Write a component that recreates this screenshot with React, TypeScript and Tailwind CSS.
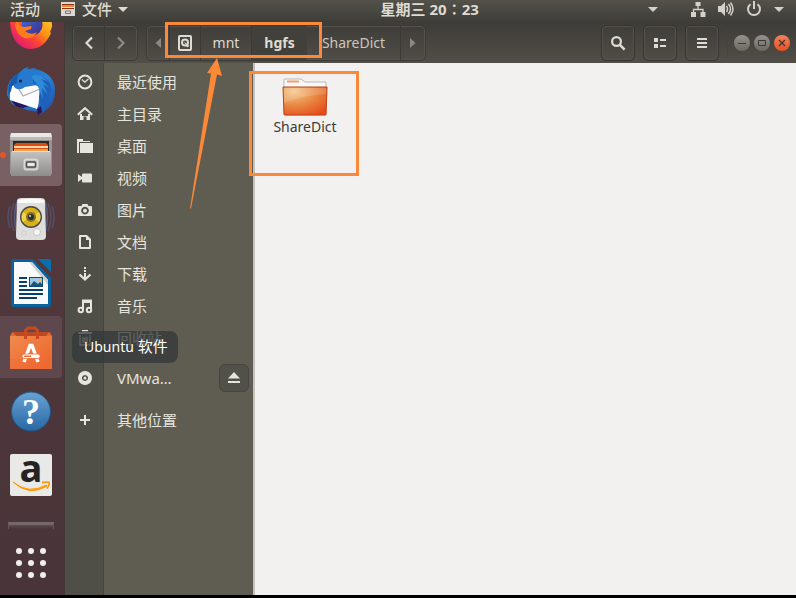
import type { ReactNode } from 'react'
import clsx from 'clsx'

/* ---------- symbolic icons (16px grid) ---------- */

function Glyph({ children }: { children: ReactNode }) {
  return (
    <svg viewBox="0 0 16 16" className="size-4 shrink-0" fill="currentColor" aria-hidden="true">
      {children}
    </svg>
  )
}

const icons = {
  recent: (
    <Glyph>
      <circle cx="8" cy="8" r="6.4" fill="none" stroke="currentColor" strokeWidth="2" />
      <path d="M5 5.5 7.8 8.2 11.4 5" fill="none" stroke="currentColor" strokeWidth="1.3" />
    </Glyph>
  ),
  home: (
    <Glyph>
      <path d="M.8 8.800 8 2.200l7.200 6.600" fill="none" stroke="currentColor" strokeWidth="2" />
      <path d="M3 8h2v2h6V8h2v6H9.500v-3.500h-3V14H3z" />
    </Glyph>
  ),
  folder: (
    <Glyph>
      <path d="M0 15V1h6v2h7v1H2v11z" />
      <path d="M3 15V5h13v10z" />
    </Glyph>
  ),
  video: (
    <Glyph>
      <path d="M1 4v8l4-3V7z" />
      <rect x="5" y="3.5" width="10" height="9" rx="1" />
    </Glyph>
  ),
  camera: (
    <Glyph>
      <path
        fillRule="evenodd"
        d="M5.5 2h5l1 2H14q1 0 1 1v8q0 1-1 1H2q-1 0-1-1V5q0-1 1-1h2.500zM8 4.800a3.800 3.800 0 1 0 .01 0zm0 2a1.900 1.900 0 1 1-.01 0z"
      />
    </Glyph>
  ),
  document: (
    <Glyph>
      <path d="M3 2h6.500L13 5.500V14H3z" fill="none" stroke="currentColor" strokeWidth="2" strokeLinejoin="round" />
      <path d="M9 1.500V6h4.500z" />
    </Glyph>
  ),
  download: (
    <Glyph>
      <path d="M7 1h2v2H7zM7 4h2v2H7zM7 7h2v5H7z" />
      <path d="M2.500 8.500 8 13.500l5.500-5" fill="none" stroke="currentColor" strokeWidth="2.200" />
    </Glyph>
  ),
  music: (
    <Glyph>
      <path d="M6 12V2.500h8V11" fill="none" stroke="currentColor" strokeWidth="2" />
      <path d="M6 2h9v3H6z" />
      <circle cx="3.800" cy="12" r="2.200" fill="none" stroke="currentColor" strokeWidth="2" />
      <circle cx="12" cy="12" r="2.200" fill="none" stroke="currentColor" strokeWidth="2" />
    </Glyph>
  ),
  trash: (
    <Glyph>
      <path d="M5 0h6v2h4v2H1V2h4z" />
      <path d="M3 5v10h10V5M6 7v6M8 7v6M10 7v6" fill="none" stroke="currentColor" strokeWidth="1.300" />
    </Glyph>
  ),
  disc: (
    <Glyph>
      <path fillRule="evenodd" d="M8 1a7 7 0 1 0 .01 0zm0 4a3 3 0 1 1-.01 0z" />
      <circle cx="8" cy="8" r="1.500" />
    </Glyph>
  ),
  plus: (
    <Glyph>
      <path d="M7 3h2v4h4v2H9v4H7V9H3V7h4z" />
    </Glyph>
  ),
  eject: (
    <Glyph>
      <path d="m8 2 6 6.500H2zM2 11h12v2H2z" />
    </Glyph>
  ),
  disk: (
    <Glyph>
      <rect x="2" y="1" width="12" height="14" rx="1" fill="none" stroke="currentColor" strokeWidth="2" />
      <circle cx="8" cy="7.500" r="3" fill="none" stroke="currentColor" strokeWidth="2" />
      <path d="m7 6.500 5.500 4.500-2.500 1.500z" />
    </Glyph>
  ),
  search: (
    <Glyph>
      <circle cx="6.500" cy="6.500" r="4.400" fill="none" stroke="currentColor" strokeWidth="2.200" />
      <path d="m9.600 9.600 5 5" stroke="currentColor" strokeWidth="2.600" />
    </Glyph>
  ),
  list: (
    <Glyph>
      <path d="M2 3h4v4H2zM8 4h6v2H8zM2 9h4v4H2zM8 10h6v2H8z" />
    </Glyph>
  ),
  menu: (
    <Glyph>
      <path d="M3 3h10v2H3zM3 7h10v2H3zM3 11h10v2H3z" />
    </Glyph>
  ),
  back: (
    <Glyph>
      <path d="M11 2.500 5.500 8 11 13.500" fill="none" stroke="currentColor" strokeWidth="2.200" />
    </Glyph>
  ),
  forward: (
    <Glyph>
      <path d="M5 2.500 10.500 8 5 13.500" fill="none" stroke="currentColor" strokeWidth="2.200" />
    </Glyph>
  ),
  pathLeft: (
    <Glyph>
      <path d="M11 3v10L5.500 8z" />
    </Glyph>
  ),
  pathRight: (
    <Glyph>
      <path d="M5 3v10l5.500-5z" />
    </Glyph>
  ),
  network: (
    <Glyph>
      <path d="M5.500 1h5v4h-5zM1 11h5v5H1zM10.500 11h5v5h-5z" />
      <path d="M8 5v3M3.500 11V8.500H13V11" fill="none" stroke="currentColor" strokeWidth="1.300" />
    </Glyph>
  ),
  volume: (
    <Glyph>
      <path d="M0 5h3l4-4v14l-4-4H0z" />
      <path d="M8.500 5q2 3 0 6M10.500 3q4 5 0 10M12.500 1.500q5 6.500 0 13" fill="none" stroke="currentColor" strokeWidth="1.500" />
    </Glyph>
  ),
  power: (
    <Glyph>
      <path d="M4.500 3.200a6 6 0 1 0 7 0" fill="none" stroke="currentColor" strokeWidth="2" />
      <path d="M7 0h2v8H7z" />
    </Glyph>
  ),
}

function Caret() {
  return (
    <svg viewBox="0 0 10 5" className="h-[5px] w-2.5 shrink-0" fill="currentColor" aria-hidden="true">
      <path d="M0 0h10L5 5z" />
    </svg>
  )
}

/* ---------- launcher icons ---------- */

function FirefoxIcon() {
  return (
    <svg viewBox="0 0 48 48" className="size-12" aria-hidden="true">
      <defs>
        <linearGradient id="ffRing" x1="0.9" y1="0.1" x2="0.2" y2="0.9">
          <stop offset="0" stopColor="#ffd23a" />
          <stop offset="0.4" stopColor="#ff9a12" />
          <stop offset="0.7" stopColor="#fb4038" />
          <stop offset="1" stopColor="#e31b76" />
        </linearGradient>
        <linearGradient id="ffGlobe" x1="0" y1="0" x2="1" y2="1">
          <stop offset="0" stopColor="#3d6fd8" />
          <stop offset="1" stopColor="#452a86" />
        </linearGradient>
      </defs>
      <path d="M3 20Q5 8 16 4l16 1q14 8 13 19l-2 5 1 1Q37 46 23 46 5 44 3 20z" fill="url(#ffRing)" />
      <circle cx="25" cy="22" r="10.500" fill="url(#ffGlobe)" />
      <path d="M10 16q1 8 8 8l6-1q2 3-3 4l-3 1q6 5 12 1-4 8-13 6-8-4-9-13z" fill="#ff7a1c" />
    </svg>
  )
}

function ThunderbirdIcon() {
  return (
    <svg viewBox="0 0 48 48" className="size-12" aria-hidden="true">
      <defs>
        <linearGradient id="tbBody" x1="0" y1="0" x2="1" y2="1">
          <stop offset="0" stopColor="#1b6cc0" />
          <stop offset="0.5" stopColor="#2b83d2" />
          <stop offset="1" stopColor="#1b4ba5" />
        </linearGradient>
      </defs>
      <path d="M0 28Q-1 14 10 7 22-1 35 4q13 6 13 20 0 16-15 23l-2-2-11-2L5 37z" fill="url(#tbBody)" />
      <path d="M4 33q3 7 12 8l6-2zM30 42l4-3 1 6-4 3z" fill="#241763" />
      <path d="M9 16 31 18q3 8 1 14 0 5-2 10L3 33Q3 29 3 26l2-7z" fill="#fcfcfe" />
      <path d="m9 17 7 12 17-7M9 17l7 12" fill="none" stroke="#a9aab4" strokeWidth="1.300" />
      <path d="M10 15Q12 1 22 0l-2 2 9-1-5 4q8 0 11 6l-5 7-12 2q-5 4-10 1l-2-3z" fill="#2679ce" />
      <path d="M2 18Q6 9 12 6q-3 5-2 10l-5 3-1 5-3 4z" fill="#1758aa" />
      <path d="M26 10q11-3 17 7l2 8-3 1 1 7-4 1v7l-5-3-2-8 1-9-7-5z" fill="#1e61bd" />
      <path d="M24 9q9-3 16 5l-6-2 8 9-6-4 5 11-6-7 1 12-5-14z" fill="#2d8cda" />
      <circle cx="13.500" cy="14" r="1.600" fill="#172743" />
    </svg>
  )
}

function FilesIcon() {
  return (
    <svg viewBox="0 0 48 48" className="size-12" aria-hidden="true">
      <defs>
        <linearGradient id="cabFront" x1="0" y1="0" x2="0" y2="1">
          <stop offset="0" stopColor="#c4c3c2" />
          <stop offset="1" stopColor="#8d8c8b" />
        </linearGradient>
      </defs>
      <path d="M4 2h40l1 5v36H3V7z" fill="#969594" />
      <path d="M4 2h40l1 4H3z" fill="#e9e9e8" />
      <path d="M3 6h42v3H3z" fill="#bab9b8" />
      <rect x="6" y="10" width="36" height="11" fill="#2b2826" />
      <path d="M7 14 9 12h30l2 2v6H7z" fill="#dc4d12" />
      <path d="M7 15h34v2H7z" fill="#f9d5ab" />
      <path d="M7 18h34v3H7z" fill="#f3a04d" />
      <path d="M5 20h38l1 2v23H4V22z" fill="url(#cabFront)" />
      <path d="M5 20h38v1H5z" fill="#e2e2e1" />
      <rect x="17.500" y="28.500" width="13" height="10" rx="2" fill="none" stroke="#d8d7d6" strokeWidth="2" />
      <rect x="19.500" y="31" width="9" height="5" rx="1" fill="#e9eae4" stroke="#4a4b49" strokeWidth="1.500" />
    </svg>
  )
}

function MusicIcon() {
  return (
    <svg viewBox="0 0 48 48" className="size-12" aria-hidden="true">
      <g fill="none" stroke="#596c9c" strokeWidth="1.500">
        <path d="M7 8q-6 14 0 28M3 11q-4 11 0 22M41 8q6 14 0 28M45 11q4 11 0 22" opacity="0.45" />
        <path d="M10 6Q5 22 10 38M38 6q5 16 0 32" opacity="0.7" />
      </g>
      <path d="M10 5q1-2 4-2h20q3 0 4 2l1 36q0 4-4 4H13q-4 0-4-4z" fill="#dededc" />
      <path d="M11 5q13-3 26 0v3H11z" fill="#fafafa" />
      <circle cx="24" cy="22" r="11" fill="#4a4746" />
      <circle cx="24" cy="22" r="9.500" fill="#d8b118" />
      <path d="m24 22 8-5q3 5 0 10zM24 22l-8-5q-3 5 0 10z" fill="#edd34b" />
      <circle cx="24" cy="22" r="5" fill="#827023" />
      <circle cx="24" cy="22" r="3" fill="#312e30" />
      <circle cx="23" cy="21" r="1" fill="#d7d7d7" />
      <circle cx="30" cy="37" r="3.500" fill="#f5f5f3" stroke="#c6c6c4" />
      <path d="M15 36h4v4h-4z" fill="none" stroke="#cfcfcd" />
    </svg>
  )
}

function WriterIcon() {
  return (
    <svg viewBox="0 0 48 48" className="size-12" aria-hidden="true">
      <path d="M6 0h20l18 19v26q0 3-3 3H7q-3 0-3-3V2q0-2 2-2z" fill="#07629d" />
      <path d="M31 0h11q2 0 2 2v11z" fill="#0a70ad" />
      <path d="M7 3h18l16 18v24H7z" fill="#fafafa" />
      <path d="m25 3 16 18v5L22 3z" fill="#cfcfd0" />
      <path d="M12 18h8v2h-8zM12 22h8v2h-8zM12 26h8v2h-8zM12 30h24v2H12zM12 34h24v2H12zM12 38h18v2H12z" fill="#073f6a" />
      <path d="M22 18h14v10H22z" fill="#0c4a79" />
      <path d="M23 19h12v8H23z" fill="#9cc9e5" />
      <path d="m23 27 4-5 4 3 2-2 2 2v2z" fill="#225373" />
      <circle cx="33" cy="21" r="1.500" fill="#ebc144" />
    </svg>
  )
}

function SoftwareIcon() {
  return (
    <svg viewBox="0 0 48 48" className="size-12" aria-hidden="true">
      <defs>
        <linearGradient id="bag" x1="0" y1="0" x2="1" y2="1">
          <stop offset="0" stopColor="#f08a4d" />
          <stop offset="1" stopColor="#ed632b" />
        </linearGradient>
      </defs>
      <path d="M5 9h38l2 5H3z" fill="#b84923" />
      <path d="M3 13 6 9l4 5zM45 13l-3-4-4 5z" fill="#e66736" />
      <path d="M3 13h42v33H3z" fill="url(#bag)" />
      <path d="M18.500 16V7.500L21 5h7l2.500 2.500V16" fill="none" stroke="#cc4720" strokeWidth="3" />
      <path d="M3 36h42v10H3z" fill="#f06b36" opacity="0.5" />
      <path d="m17 39 6-16.500h2L31 39" fill="none" stroke="#fff" strokeWidth="3.500" />
      <rect x="15" y="31" width="18" height="4.500" rx="2" fill="#fff" stroke="#ed6a30" strokeWidth="0.800" />
      <path d="M17 32.500h7v1.500h-7z" fill="#ed6a30" />
    </svg>
  )
}

function HelpIcon() {
  return (
    <svg viewBox="0 0 48 48" className="size-12" aria-hidden="true">
      <defs>
        <linearGradient id="helpBall" x1="0" y1="0" x2="0" y2="1">
          <stop offset="0" stopColor="#69a2d3" />
          <stop offset="1" stopColor="#2968a5" />
        </linearGradient>
      </defs>
      <circle cx="24" cy="24.500" r="19.500" fill="url(#helpBall)" stroke="#215789" />
      <text x="24" y="37" textAnchor="middle" fill="#fff" className="font-['Liberation_Serif',serif] text-[36px] font-bold">?</text>
    </svg>
  )
}

function AmazonIcon() {
  return (
    <svg viewBox="0 0 48 48" className="size-12" aria-hidden="true">
      <rect x="3" y="3" width="42" height="42" rx="2" fill="#e9e9e8" />
      <text x="24" y="31" textAnchor="middle" fill="#242321" className="font-['Open_Sans',sans-serif] text-[38px] font-bold">a</text>
      <path d="M6 31q16 13 33 3l1 1Q22 46 6 31z" fill="#ff9900" stroke="#ff9900" />
      <path d="M35 31.500q6-1 7 0t-2 6" fill="none" stroke="#ff9900" strokeWidth="1.800" />
    </svg>
  )
}

function FolderIcon() {
  return (
    <svg viewBox="0 0 48 40" className="h-10 w-12" aria-hidden="true">
      <defs>
        <radialGradient id="folderFront" cx="0.25" cy="0.15" r="1">
          <stop offset="0" stopColor="#f4c88c" />
          <stop offset="0.5" stopColor="#e88a45" />
          <stop offset="1" stopColor="#e64a17" />
        </radialGradient>
      </defs>
      <path d="M3 38V3q0-1 1-1h16l4 3h21v33z" fill="#f8f8f8" stroke="#b9b9b8" />
      <path d="M6 3.500h12v2H6z" fill="#eda26c" />
      <path d="M2 10h44l-1 27q0 1-1 1H4q-1 0-1-1z" fill="url(#folderFront)" stroke="#bd4316" />
      <path d="M3 11h42v6q-23 1-42 9z" fill="#fff" opacity="0.15" />
    </svg>
  )
}

/* ---------- data ---------- */

const launchers = [
  { name: 'Firefox', icon: <FirefoxIcon /> },
  { name: 'Thunderbird', icon: <ThunderbirdIcon /> },
  { name: '文件', icon: <FilesIcon />, running: true },
  { name: 'Rhythmbox', icon: <MusicIcon /> },
  { name: 'LibreOffice Writer', icon: <WriterIcon /> },
  { name: 'Ubuntu 软件', icon: <SoftwareIcon />, hovered: true },
  { name: '帮助', icon: <HelpIcon /> },
  { name: 'Amazon', icon: <AmazonIcon /> },
]

const places = [
  { label: '最近使用', icon: icons.recent },
  { label: '主目录', icon: icons.home },
  { label: '桌面', icon: icons.folder },
  { label: '视频', icon: icons.video },
  { label: '图片', icon: icons.camera },
  { label: '文档', icon: icons.document },
  { label: '下载', icon: icons.download },
  { label: '音乐', icon: icons.music },
  { label: '回收站', icon: icons.trash },
]

/* ---------- parts ---------- */

function TopBar() {
  return (
    <header className="grid h-[22px] shrink-0 grid-cols-[6fr_auto_5fr] items-center overflow-hidden bg-linear-to-b from-[#54514a] to-[#3e3d38] pb-1 text-[15px] leading-[18px] font-medium text-[#dfdbd2]">
      <div className="flex items-center pl-2.5">
        <button type="button">活动</button>
        <button type="button" className="ml-5 flex items-center gap-1.5">
          <svg viewBox="0 0 16 16" className="size-4" aria-hidden="true">
            <path d="M1 1h14v14H1z" fill="#d9d8d5" />
            <path d="M2 3h12v5H2z" fill="#8f3610" />
            <path d="M2 4h12v2H2z" fill="#f08338" />
            <path d="M2 6h12v1H2z" fill="#fbe0c5" />
            <path d="M5.500 10h5v2.500h-5z" fill="none" stroke="#777" />
          </svg>
          文件
          <Caret />
        </button>
      </div>
      <button type="button" className="font-bold">星期三 20∶23</button>
      <div className="flex items-center justify-end pr-3 text-[#d4d1ca]">
        <button type="button" aria-label="输入法" className="mr-8"><Caret /></button>
        <button type="button" aria-label="系统菜单" className="flex items-center gap-3">
          {icons.network}
          {icons.volume}
          {icons.power}
          <Caret />
        </button>
      </div>
    </header>
  )
}

function Dock() {
  return (
    <nav aria-label="Dock" className="flex w-[65px] shrink-0 flex-col justify-end gap-0.5 overflow-hidden border-r border-[#453838] bg-linear-to-b from-[#583a3b] via-[#4f373b] to-[#483439] pb-0.5">
      {launchers.map((app) => (
        <button
          key={app.name}
          type="button"
          aria-label={app.name}
          className={clsx(
            'relative flex h-[62px] w-[62px] shrink-0 items-center justify-center rounded-r',
            app.running && 'bg-[#796063]',
            app.hovered && 'bg-[#5e484d]',
          )}
        >
          {app.running && <span className="absolute left-0 size-1.5 rounded-full bg-[#e95420]" />}
          {app.icon}
        </button>
      ))}
      <div className="flex h-[21px] w-[62px] shrink-0 items-end justify-center">
        <div className="h-[7px] w-[46px] border-x border-t-3 border-x-[#65555a] border-t-[#76676b] bg-linear-to-b from-[#5d4b50] to-[#48343a]" />
      </div>
      <button type="button" aria-label="显示应用程序" className="flex h-[62px] w-[62px] shrink-0 items-center justify-center pt-0.5">
        <span className="grid grid-cols-3 gap-1.5">
          {Array.from({ length: 9 }, (_, i) => (
            <span key={i} className="size-1.5 rounded-full bg-[#f1efee]" />
          ))}
        </span>
      </button>
    </nav>
  )
}

function ToolButton({ label, children }: { label: string; children: ReactNode }) {
  return (
    <button
      type="button"
      aria-label={label}
      className="flex h-9 w-[34px] items-center justify-center rounded-[5px] border border-[#34332f] text-[#dfdbd2] shadow-[inset_0_0_0_1px_#55534c]"
    >
      {children}
    </button>
  )
}

function TitleBar() {
  return (
    <div className="flex h-[41px] shrink-0 items-center bg-linear-to-b from-[#3d3c38] to-[#524e48] pr-1.5 pl-[7px] text-sm text-[#dfdbd2]">
      <div className="flex h-9 rounded-[5px] border border-[#3a3935] shadow-[inset_0_0_0_1px_#55534c]">
        <button type="button" aria-label="后退" className="flex w-8 items-center justify-center border-r border-[#3a3935]">{icons.back}</button>
        <button type="button" aria-label="前进" className="flex w-8 items-center justify-center text-[#8b8881]">{icons.forward}</button>
      </div>
      <div className="ml-2 flex h-9 rounded-[5px] border border-[#3a3935] shadow-[inset_0_0_0_1px_#55534c]">
        <button type="button" aria-label="向左" className="flex w-[22px] items-center justify-center text-[#8b8881]">{icons.pathLeft}</button>
        <button type="button" aria-label="计算机" className="flex w-8 items-center justify-center border-x border-[#3a3935]">{icons.disk}</button>
        <button type="button" className="w-[51px] border-r border-[#3a3935]">mnt</button>
        <button type="button" className="w-[55px] bg-[#41403b] font-bold">hgfs</button>
        <button type="button" className="w-[94px] border-r border-[#3a3935] text-[#cbc7bf]">ShareDict</button>
        <button type="button" aria-label="向右" className="flex w-6 items-center justify-center text-[#8b8881]">{icons.pathRight}</button>
      </div>
      <div className="ml-auto flex items-center gap-2">
        <ToolButton label="搜索">{icons.search}</ToolButton>
        <ToolButton label="列表视图">{icons.list}</ToolButton>
        <ToolButton label="菜单">{icons.menu}</ToolButton>
      </div>
      <div className="ml-2 flex h-7 items-center gap-1 border-l border-[#45433e] pl-1.5 text-[#3a3935]">
        <button type="button" aria-label="最小化" className="size-4 rounded-full bg-linear-to-b from-[#94918a] to-[#6d6a64]">
          <svg viewBox="0 0 16 16" stroke="currentColor" aria-hidden="true"><path d="M4 8.500h8" /></svg>
        </button>
        <button type="button" aria-label="最大化" className="size-4 rounded-full bg-linear-to-b from-[#94918a] to-[#6d6a64]">
          <svg viewBox="0 0 16 16" fill="none" stroke="currentColor" aria-hidden="true"><path d="M4.500 5.500h7v5h-7z" /></svg>
        </button>
        <button type="button" aria-label="关闭" className="size-4 rounded-full bg-linear-to-b from-[#f5805a] to-[#e5501f]">
          <svg viewBox="0 0 16 16" stroke="currentColor" strokeWidth="1.300" aria-hidden="true"><path d="m5 5 6 6M11 5l-6 6" /></svg>
        </button>
      </div>
    </div>
  )
}

function Place({ icon, label }: { icon: ReactNode; label: string }) {
  return (
    <button type="button" className="flex h-8 w-full items-center text-left">
      <span className="flex w-[39px] shrink-0 justify-center">{icon}</span>
      <span className="pl-[13px]">{label}</span>
    </button>
  )
}

function Sidebar() {
  return (
    <aside className="w-[190px] shrink-0 border-r-2 border-[#c5c1bf] bg-[linear-gradient(to_right,#4f4f47_38px,#45443f_38px,#45443f_39px,#5f5d51_39px)] pt-[3px] text-[15px] text-[#e6e4df]">
      {places.map((p) => <Place key={p.label} {...p} />)}
      <div className="mt-2 flex items-center">
        <Place icon={icons.disc} label="VMwa…" />
        <button type="button" aria-label="弹出" className="mr-1 flex h-7 w-[30px] shrink-0 items-center justify-center rounded-md border border-[#454440] bg-[#525149]">
          {icons.eject}
        </button>
      </div>
      <div className="mt-2.5">
        <Place icon={icons.plus} label="其他位置" />
      </div>
    </aside>
  )
}

/* Orange marks drawn over the desktop */
function Annotations() {
  return (
    <div className="pointer-events-none absolute inset-0">
      <div className="absolute top-[22px] left-[165px] h-9 w-[157px] border-3 border-[#fb8938]" />
      <div className="absolute top-[71px] left-[249px] h-[105px] w-[110px] border-3 border-[#fb8938]" />
      <svg viewBox="0 0 40 160" className="absolute top-14 left-[185px] h-40 w-10" aria-hidden="true">
        <path d="M32 2 37 20 32 18.500 6 152.500 5 152.500 26 17.500 22 17z" fill="#fb8938" />
      </svg>
    </div>
  )
}

export default function App() {
  return (
    <div className="relative flex h-screen flex-col overflow-hidden bg-black pb-[3px] font-['Noto_Sans','Noto_Sans_CJK_SC',sans-serif]">
      <TopBar />
      <div className="flex min-h-0 flex-1">
        <Dock />
        <div className="flex min-w-0 flex-1 flex-col">
          <TitleBar />
          <div className="flex min-h-0 flex-1">
            <Sidebar />
            <main className="flex-1 bg-[#f2f1f0] pt-3.5">
              <button type="button" className="flex w-[100px] flex-col items-center text-sm leading-5 text-[#3c3b37]">
                <FolderIcon />
                <span>ShareDict</span>
              </button>
            </main>
          </div>
        </div>
      </div>
      <div role="tooltip" className="absolute top-[331px] left-[72px] rounded-lg bg-[#323738]/75 py-1.5 pr-2.5 pl-3 text-[15px] leading-[19px] text-white">
        <span className="text-sm">Ubuntu</span> 软件
      </div>
      <Annotations />
    </div>
  )
}
